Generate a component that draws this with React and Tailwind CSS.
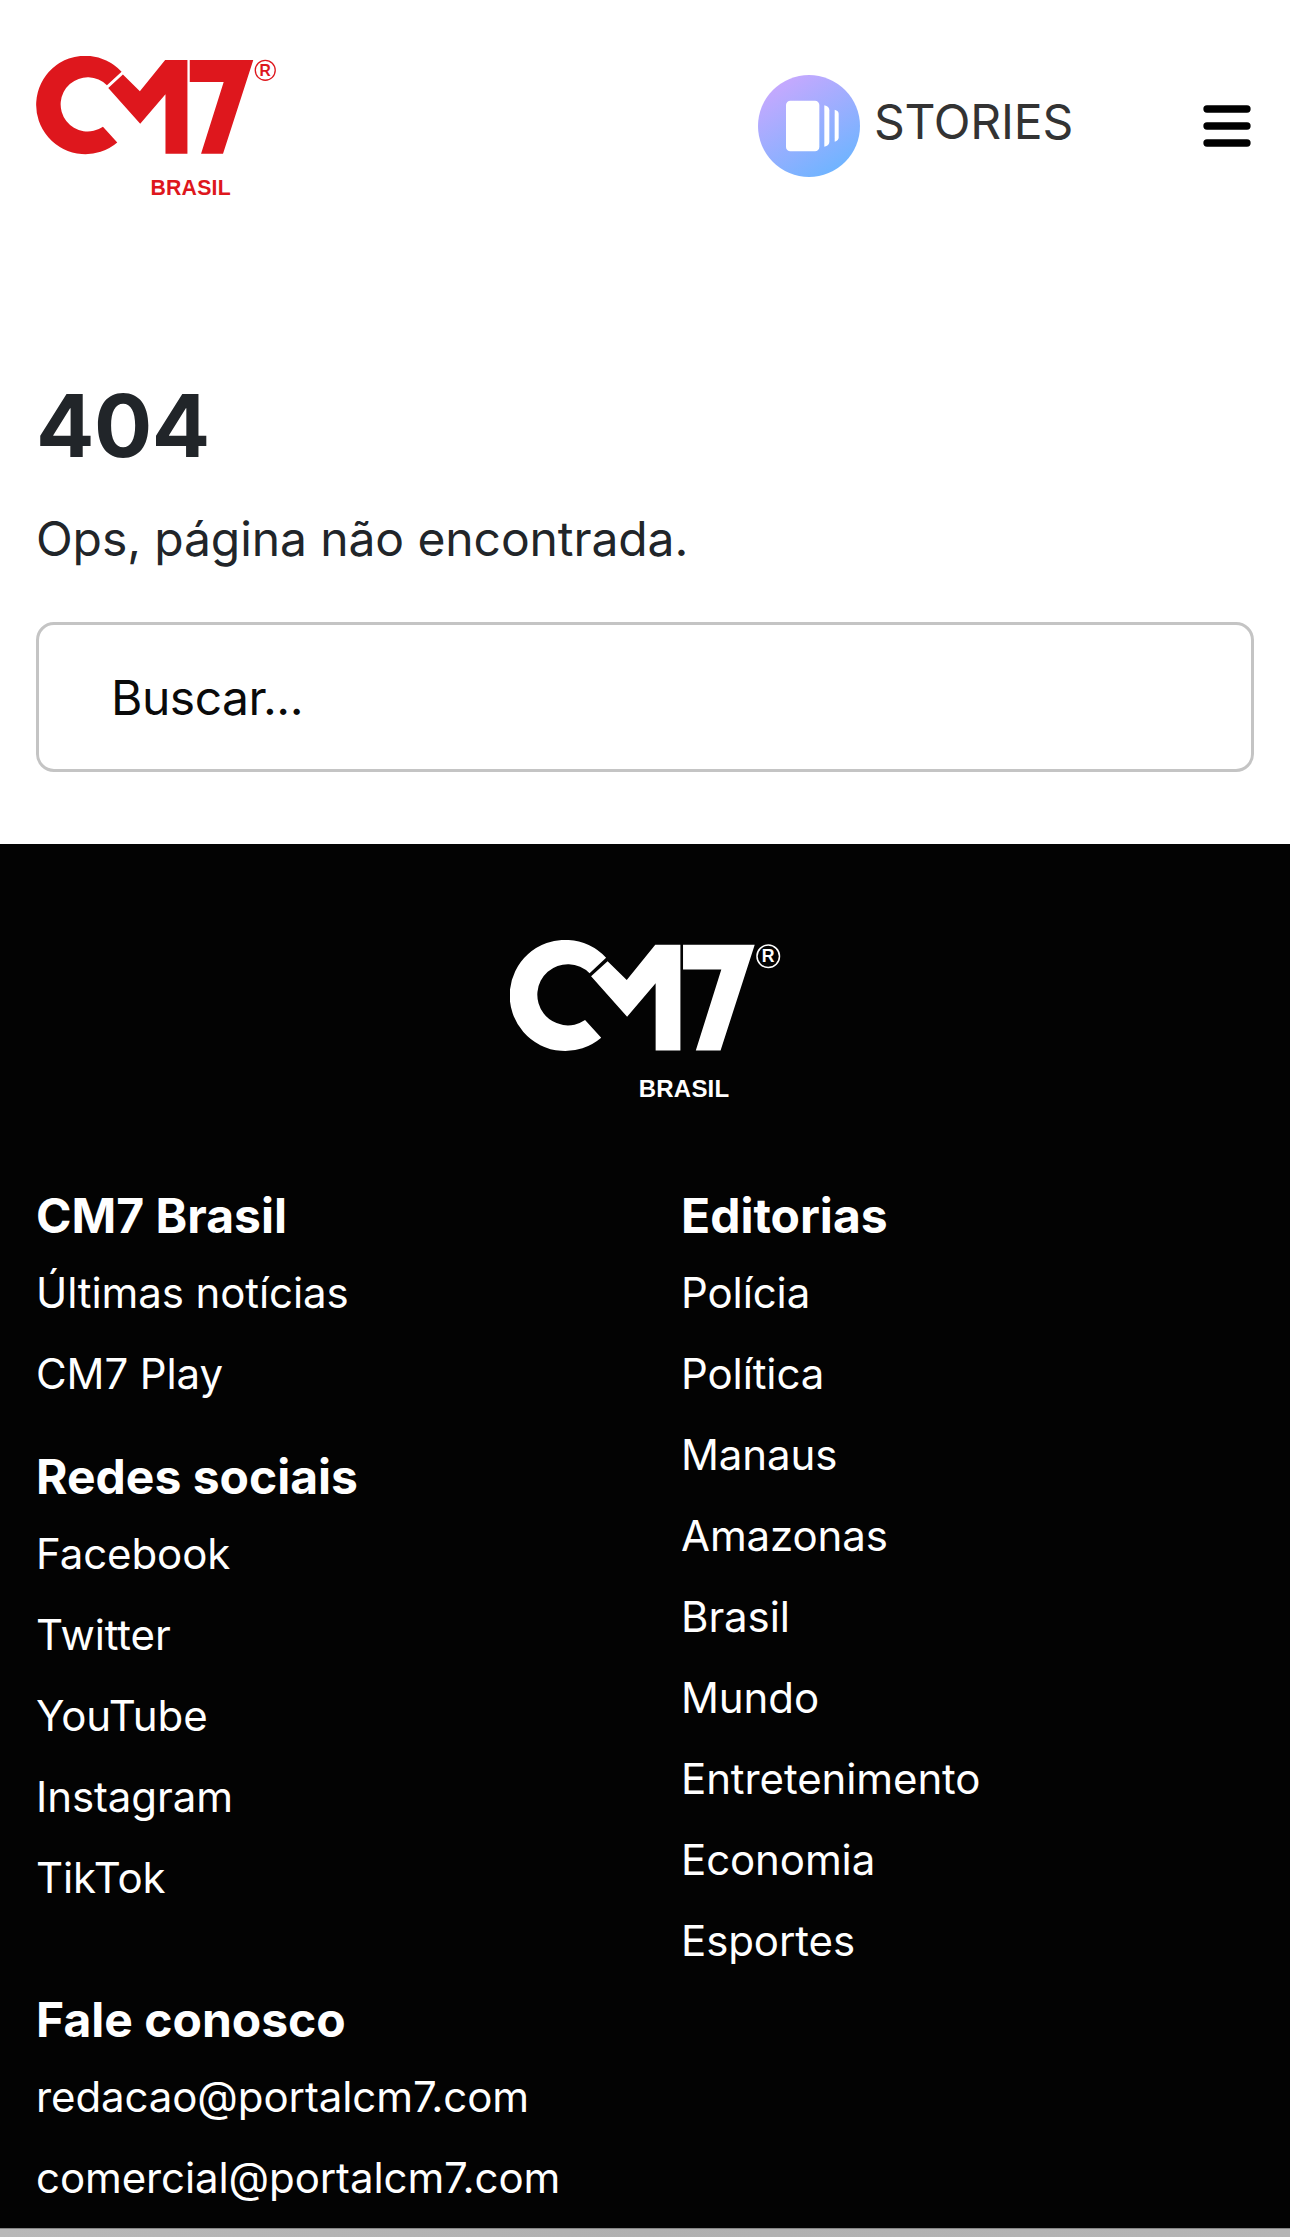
import React, { useState } from "react";

const portalLinks = ["Últimas notícias", "CM7 Play"];
const socialLinks = ["Facebook", "Twitter", "YouTube", "Instagram", "TikTok"];
const sectionLinks = [
  "Polícia",
  "Política",
  "Manaus",
  "Amazonas",
  "Brasil",
  "Mundo",
  "Entretenimento",
  "Economia",
  "Esportes",
];
const contactLinks = ["redacao@portalcm7.com", "comercial@portalcm7.com"];

const Logo = ({ className }) => (
  <svg viewBox="48 48 722 436" className={className} fill="currentColor" role="img" aria-label="CM7 Brasil">
    <path d="M304 95A148 148 0 1 0 291 308L248 261A81.500 81.500 0 1 1 260 136Z" />
    <path d="M308 104L359 154L435 60H502V342H436V163L360 252L264 144Z" />
    <path d="M509 60H700L609 342H543L611 126H509Z" />
    <circle cx="736" cy="91" r="30" fill="none" stroke="currentColor" strokeWidth="4" />
    <text x="719" y="107" fontSize="47" fontWeight="700" fontFamily="Liberation Sans, sans-serif">R</text>
    <text x="391" y="465" fontSize="64" fontWeight="700" textLength="241" fontFamily="Liberation Sans, sans-serif">BRASIL</text>
  </svg>
);

const StoriesIcon = () => (
  <svg viewBox="0 0 306 306" className="size-[102px]">
    <defs>
      <linearGradient id="stories" x1="0.2" y1="0.05" x2="0.75" y2="0.95">
        <stop offset="0" stopColor="#c8a8fe" />
        <stop offset="1" stopColor="#6fb4ff" />
      </linearGradient>
    </defs>
    <circle cx="153" cy="153" r="153" fill="url(#stories)" />
    <rect x="84" y="77" width="100" height="152" rx="13" fill="#fff" />
    <path d="M199 91Q214 94 214 106V200Q214 212 199 215Z" fill="#fff" />
    <path d="M230 104Q242 107 242 117V187Q242 197 230 200Z" fill="#fff" />
  </svg>
);

const FooterGroup = ({ title, links, className = "" }) => (
  <div className={className}>
    <h2 className="mb-[7px] text-[48px] leading-[58px] font-bold">{title}</h2>
    <ul>
      {links.map((link) => (
        <li key={link} className="text-[42px] leading-[81px] tracking-[-0.1px]">
          <a href="#">{link}</a>
        </li>
      ))}
    </ul>
  </div>
);

const App = () => {
  const [search, setSearch] = useState("");

  return (
    <div className="h-[2237px] overflow-hidden bg-white font-['Inter',sans-serif] text-[#212529]">
      {/* header */}
      <header className="flex h-[252px] items-center pr-[39px] pl-9">
        <a href="#">
          <Logo className="mt-[5px] h-[145px] w-[241px] text-[#de171d]" />
        </a>
        <a href="#" className="ml-auto flex items-center gap-3.5 text-[#333]">
          <StoriesIcon />
          <span className="pb-[9px] text-[48px] leading-[58px] tracking-[-0.2px]">STORIES</span>
        </a>
        <button aria-label="Abrir menu" className="ml-[130px] text-black">
          <svg viewBox="0 0 48 42" className="h-[42px] w-12" stroke="currentColor" strokeWidth="7.300" strokeLinecap="round">
            <path d="M4 4H44M4 21H44M4 38H44" />
          </svg>
        </button>
      </header>

      {/* 404 message + search */}
      <main className="h-[592px] px-9 pt-[122px]">
        <h1 className="text-[86.4px] leading-[104px] font-bold tracking-[-0.5px]">404</h1>
        <p className="mt-8 text-[48px] leading-[58px] tracking-[-0.1px]">Ops, página não encontrada.</p>
        <input
          type="text"
          value={search}
          onChange={(e) => setSearch(e.target.value)}
          placeholder="Buscar..."
          className="mt-[54px] block h-[150px] w-full rounded-[18px] border-3 border-[#c4c4c4] px-[72px] text-[48px] tracking-[-0.5px] outline-none placeholder:text-[#0a0a0a]"
        />
      </main>

      <footer className="h-[1384px] bg-[#030303] px-9 pt-24 text-white">
        <Logo className="mx-auto h-[164px] w-[271px]" />
        <div className="mt-[83px] grid grid-cols-2">
          <div>
            <FooterGroup title="CM7 Brasil" links={portalLinks} />
            <FooterGroup title="Redes sociais" links={socialLinks} className="mt-[34px]" />
          </div>
          <FooterGroup title="Editorias" links={sectionLinks} className="pl-9" />
        </div>
        <FooterGroup title="Fale conosco" links={contactLinks} className="mt-[10px]" />
      </footer>

      {/* bottom bar */}
      <div className="h-[9px] border-t border-[#858585] bg-linear-to-r from-[#b8b8b8] via-[#b0b0b0] to-[#b5b5b5]" />
    </div>
  );
};

export default App;
